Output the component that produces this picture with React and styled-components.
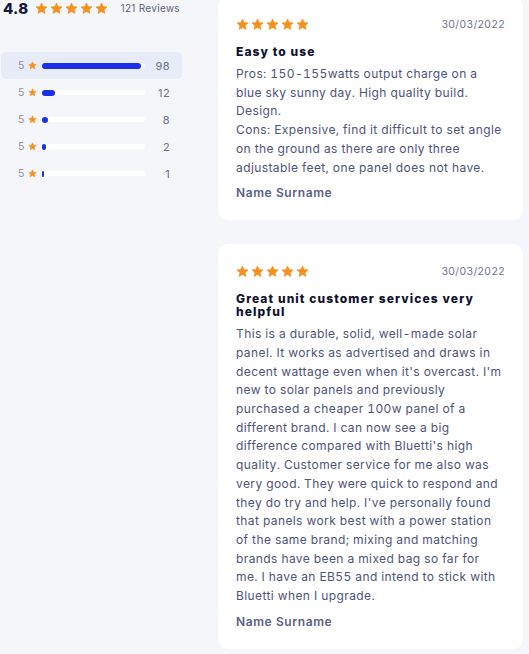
import React from "react";
import styled, { createGlobalStyle } from "styled-components";

const Global = createGlobalStyle`
  html, body { margin: 0; padding: 0; background: #f5f6fa; }
  body { font-family: Inter, "Noto Sans", sans-serif; -webkit-font-smoothing: antialiased; }
  * { box-sizing: border-box; }
`;

const Page = styled.div`
  display: flex;
  align-items: flex-start;
  gap: 36px;
  margin-top: -3px;
  padding-left: 1px;
  width: 529px;
`;

const Sidebar = styled.aside`
  width: 181px;
  flex: none;
  display: flex;
  flex-direction: column;
`;

const Summary = styled.div`
  display: flex;
  align-items: center;
  height: 22px;
  padding-left: 2px;
  margin-bottom: 33px;
`;

const Score = styled.span`
  font-size: 15px;
  font-weight: 800;
  color: #171a3a;
  letter-spacing: 0.3px;
  margin-right: 6px;
`;

const Reviews = styled.span`
  font-size: 10px;
  letter-spacing: 0.3px;
  color: #5c6180;
  margin-left: 13px;
`;

const StarRow = styled.div`
  display: flex;
  gap: ${(p) => p.$gap}px;
`;

const Row = styled.div`
  display: flex;
  align-items: center;
  height: 27px;
  padding: 0 12px 0 17px;
  border-radius: 5px;
  background: ${(p) => (p.$active ? "#e8ecf9" : "transparent")};
`;

const RowLabel = styled.span`
  font-size: 10.5px;
  color: #8a8fa8;
  width: 10px;
`;

const RowStar = styled.span`
  display: flex;
  width: 14px;
`;

const Track = styled.div`
  width: 103px;
  height: 5px;
  border-radius: 3px;
  background: #ffffff;
  display: flex;
  align-items: center;
`;

const Fill = styled.div`
  height: 6px;
  border-radius: 3px;
  background: #1b2ee8;
`;

const Count = styled.span`
  margin-left: auto;
  font-size: 11px;
  letter-spacing: 0.4px;
  color: #6b7090;
`;

const Cards = styled.div`
  width: 305px;
  display: flex;
  flex-direction: column;
  gap: 24px;
`;

const Card = styled.article`
  background: #ffffff;
  border-radius: 10px;
  padding: 21px 18px 19px 18px;
`;

const CardHead = styled.div`
  display: flex;
  align-items: center;
  justify-content: space-between;
  height: 12px;
  margin-bottom: 15px;
`;

const DateText = styled.span`
  font-size: 10.5px;
  letter-spacing: 0.4px;
  color: #6e7391;
`;

const Title = styled.h3`
  margin: 0 0 7px 0;
  font-size: 12px;
  line-height: 13px;
  font-weight: 800;
  letter-spacing: 1.1px;
  color: #10122e;
`;

const Body = styled.p`
  margin: 0 0 8px 0;
  font-size: 12px;
  line-height: 18.7px;
  letter-spacing: 0.4px;
  font-variant-numeric: tabular-nums;
  color: #4d5379;
`;

const Author = styled.div`
  font-size: 12px;
  line-height: 16px;
  font-weight: 600;
  letter-spacing: 0.6px;
  color: #5a6085;
`;

const Star = ({ size }) => (
  <svg width={size} height={size} viewBox="0 0 24 24">
    <path
      d="M12 1.8l3.1 6.6 7.1.8-5.3 4.9 1.5 7.1L12 17.6l-6.4 3.6 1.5-7.1-5.3-4.9 7.1-.8z"
      fill="#f5911e"
      stroke="#f5911e"
      strokeWidth="1.2"
      strokeLinejoin="round"
    />
  </svg>
);

const Stars = ({ size, gap }) => (
  <StarRow $gap={gap}>
    {[0, 1, 2, 3, 4].map((i) => (
      <Star key={i} size={size} />
    ))}
  </StarRow>
);

const rows = [
  { n: 98, w: 99 },
  { n: 12, w: 13 },
  { n: 8, w: 6 },
  { n: 2, w: 4 },
  { n: 1, w: 2 },
];

const reviews = [
  {
    title: "Easy to use",
    lines: [
      "Pros: 150-155watts output charge on a",
      "blue sky sunny day. High quality build.",
      "Design.",
      "Cons: Expensive, find it difficult to set angle",
      "on the ground as there are only three",
      "adjustable feet, one panel does not have.",
    ],
  },
  {
    title: "Great unit customer services very helpful",
    lines: [
      "This is a durable, solid, well-made solar",
      "panel. It works as advertised and draws in",
      "decent wattage even when it's overcast. I'm",
      "new to solar panels and previously",
      "purchased a cheaper 100w panel of a",
      "different brand. I can now see a big",
      "difference compared with Bluetti's high",
      "quality. Customer service for me also was",
      "very good. They were quick to respond and",
      "they do try and help. I've personally found",
      "that panels work best with a power station",
      "of the same brand; mixing and matching",
      "brands have been a mixed bag so far for",
      "me. I have an EB55 and intend to stick with",
      "Bluetti when I upgrade.",
    ],
  },
];

export default function App() {
  return (
    <>
      <Global />
      <Page>
        <Sidebar>
          <Summary>
            <Score>4.8</Score>
            <Stars size={13} gap={2} />
            <Reviews>121 Reviews</Reviews>
          </Summary>
          {rows.map((r, i) => (
            <Row key={i} $active={i === 0}>
              <RowLabel>5</RowLabel>
              <RowStar>
                <Star size={9} />
              </RowStar>
              <Track>
                <Fill style={{ width: r.w }} />
              </Track>
              <Count>{r.n}</Count>
            </Row>
          ))}
        </Sidebar>
        <Cards>
          {reviews.map((rv, i) => (
            <Card key={i}>
              <CardHead>
                <Stars size={13} gap={2} />
                <DateText>30/03/2022</DateText>
              </CardHead>
              <Title>{rv.title}</Title>
              <Body>
                {rv.lines.map((ln, j) => (
                  <React.Fragment key={j}>
                    {j > 0 && <br />}
                    {ln}
                  </React.Fragment>
                ))}
              </Body>
              <Author>Name Surname</Author>
            </Card>
          ))}
        </Cards>
      </Page>
    </>
  );
}
